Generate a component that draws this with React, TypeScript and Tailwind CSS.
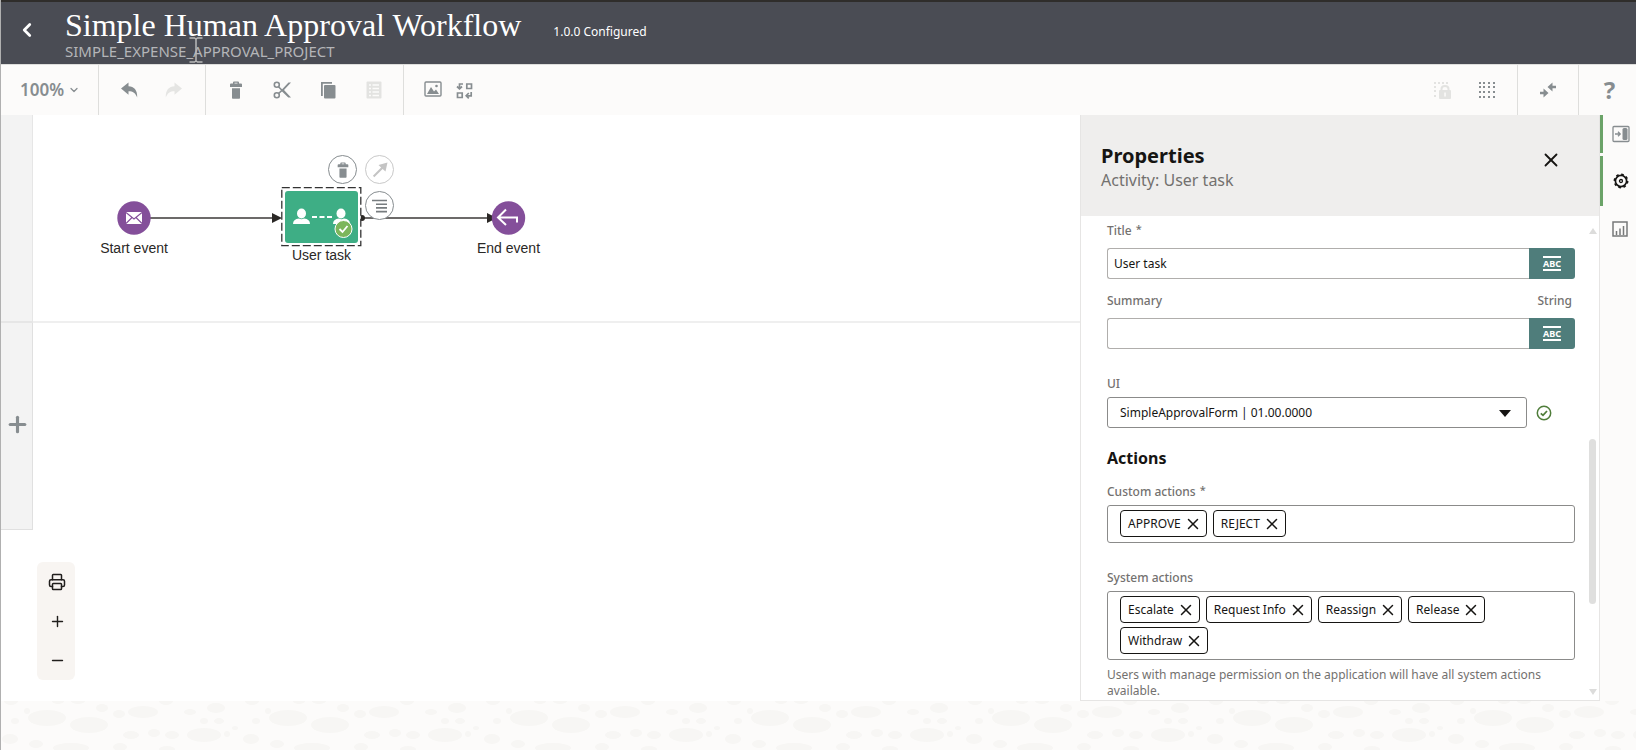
import { useState } from "react";
import type { ReactNode } from "react";
import { ChevronDown, ChevronLeft, Minus, Plus, Printer, X } from "lucide-react";

const BLOBS = [
  [10, 0, 7, 4], [57, 0, 6, 3], [77, 0, 7, 3], [101, 7, 6, 4], [165, 0, 7, 4],
  [46, 17, 19, 8], [88, 24, 19, 8], [142, 11, 15, 6], [118, 13, 6, 4], [26, 10, 3, 3],
  [14, 20, 4, 3], [9, 38, 8, 5], [35, 43, 7, 4], [70, 47, 18, 5], [119, 46, 7, 4],
  [130, 34, 8, 4], [153, 32, 6, 4], [171, 34, 7, 4], [189, 11, 6, 3], [215, 7, 9, 5],
  [203, 20, 4, 3], [218, 20, 5, 3], [234, 27, 3, 2], [226, 33, 3, 3], [203, 34, 17, 7],
  [166, 48, 8, 3],
];

function IconButton({ label, className = "", children }: { label: string; className?: string; children: ReactNode }) {
  return (
    <button aria-label={label} className={`flex size-6 shrink-0 items-center justify-center ${className}`}>
      {children}
    </button>
  );
}

function TrashIcon({ size }: { size: number }) {
  return (
    <svg width={size} height={size} viewBox="0 0 18 18" fill="currentColor">
      <path d="M6 2.500V1.500Q6 .5 7 .5h4q1 0 1 1v1h2q1 0 1 1V6H3V3.500q0-1 1-1zm1.500 0h3V1.800h-3zM5 7.200h8V17q0 .8-.8.8H5.800Q5 17.800 5 17z" />
    </svg>
  );
}

function Header() {
  return (
    <header className="relative flex h-16 shrink-0 items-start border-t-2 border-[#2f2d2b] bg-[#4a4c54] text-white">
      <button aria-label="Back" className="mt-4 ml-[14px] flex size-6 items-center justify-center">
        <ChevronLeft size={22} strokeWidth={3} />
      </button>
      <div className="mt-[7px] ml-[26px]">
        <h1 className="font-['Georgia','Liberation_Serif',serif] text-[32px] leading-[32px]">
          Simple Human Approval Workflow
        </h1>
        <p className="text-[15px] leading-[21px] text-[#b4b5b8]">SIMPLE_EXPENSE_APPROVAL_PROJECT</p>
      </div>
      <span className="mt-[20px] ml-[32px] text-[12px] leading-[20px]">1.0.0 Configured</span>
      <svg className="absolute top-[35px] left-[188px]" width="14" height="26" viewBox="0 0 14 26" fill="none" stroke="#b9b9b9" strokeWidth="1.500">
        <path d="M.5 1h5l1.500 1 1.500-1h5M7 2v22M.5 25h5L7 24l1.500 1h5" />
      </svg>
    </header>
  );
}

function Toolbar() {
  return (
    <div className="flex h-[51px] shrink-0 border-t border-[#dededc] bg-[#fcfbfa] text-[#878d90]">
      <button className="flex w-[98px] items-center gap-1 border-r border-[#dededc] pl-[19px] text-[17px] font-semibold">
        100%
        <ChevronDown size={12} strokeWidth={2.500} />
      </button>
      <div className="flex w-[107px] items-center gap-5 border-r border-[#dededc] pl-[18px]">
        <IconButton label="Undo">
          <svg width="17" height="16" viewBox="0 0 17 16" fill="currentColor">
            <path d="M0 6.500 7.500.5v3.800C13 4.500 16.500 8 16.200 15.500 14.500 11 12 9.200 7.500 9.200v3.500z" />
          </svg>
        </IconButton>
        <IconButton label="Redo" className="text-[#e5e5e3]">
          <svg width="17" height="16" viewBox="0 0 17 16" fill="currentColor">
            <path d="M17 6.500 9.500.5v3.800C4 4.500.5 8 .8 15.500 2.500 11 5 9.200 9.500 9.200v3.500z" />
          </svg>
        </IconButton>
      </div>
      <div className="flex w-[198px] items-center gap-[22px] border-r border-[#dededc] pl-[18px]">
        <IconButton label="Delete"><TrashIcon size={18} /></IconButton>
        <IconButton label="Cut">
          <svg width="18" height="18" viewBox="0 0 18 18" fill="none" stroke="currentColor" strokeWidth="1.600">
            <circle cx="3.800" cy="3.700" r="2.500" />
            <circle cx="3.800" cy="14.300" r="2.500" />
            <path d="m5.500 5.700 3.500 3.600M5.500 12.500 9 9.300" />
            <path d="m8 9.500 7.500-8H18l-7 7.500 7 7.500h-2.700z" fill="currentColor" stroke="none" />
          </svg>
        </IconButton>
        <IconButton label="Copy">
          <svg width="16" height="18" viewBox="0 0 16 18" fill="currentColor">
            <path d="M1 1h11v1.800H2.800V15H1z" />
            <rect x="4" y="4" width="11.500" height="13.500" rx="1" />
          </svg>
        </IconButton>
        <IconButton label="Paste" className="text-[#e3e3e1]">
          <svg width="16" height="18" viewBox="0 0 16 18">
            <rect x=".5" y=".5" width="15" height="17" rx="1" fill="currentColor" />
            <path d="M3 4h2M6.500 4H13M3 7.500h2M6.500 7.500H13M3 11h2M6.500 11H13M3 14.500h2M6.500 14.500H13" stroke="#fcfbfa" strokeWidth="1.500" />
          </svg>
        </IconButton>
      </div>
      <div className="flex flex-1 items-center gap-[7px] pl-[17px]">
        <IconButton label="Export image">
          <svg width="18" height="18" viewBox="0 0 18 18" fill="none" stroke="currentColor" strokeWidth="1.400">
            <rect x="1" y="1" width="16" height="14" rx="1" />
            <path d="m3 13 4-7 3 4.500 2-2L15 13z" fill="currentColor" stroke="none" />
            <circle cx="12.500" cy="5" r="1.300" fill="currentColor" stroke="none" />
          </svg>
        </IconButton>
        <IconButton label="Rearrange">
          <svg width="17" height="17" viewBox="0 0 17 17" fill="none" stroke="currentColor" strokeWidth="1.700">
            <path d="M10.800 2H15.500v4.500h-4.700zM1.500 11H6.200v4.500H1.500zM7 2H3.500v4M1 4.500l2.500 2.300L6 4.500M15.200 10v3.800h-4M12.800 11l-2.600 2.700 2.600 2.600" />
          </svg>
        </IconButton>
      </div>
      <div className="flex items-center gap-[21px] pr-[18px]">
        <IconButton label="Lock grid" className="text-[#e3e3e1]">
          <svg width="18" height="18" viewBox="0 0 18 18" fill="currentColor">
            <path d="M1 1h2v2H1zM5 1h2v2H5zM9 1h2v2H9zM13 1h2v2h-2zM1 5h2v2H1zM1 9h2v2H1zM1 14h2v2H1z" />
            <rect x="6" y="9" width="12" height="9" rx="1" />
            <path d="M8.500 9.500V8q0-3 3.500-3t3.500 3v1.500" fill="none" stroke="currentColor" strokeWidth="2" />
            <path d="M11.300 11.500h1.500v4h-1.500z" fill="#fcfbfa" />
          </svg>
        </IconButton>
        <IconButton label="Show grid">
          <svg width="18" height="18" viewBox="0 0 18 18" fill="currentColor">
            {[1, 5, 10, 15].map((y) => [1, 5, 10, 15].map((x) => <rect key={`${x}-${y}`} x={x} y={y} width="2" height="2" />))}
          </svg>
        </IconButton>
      </div>
      <div className="flex w-[61px] items-center justify-center border-l border-[#dededc]">
        <IconButton label="Collapse">
          <svg width="18" height="18" viewBox="0 0 18 18" fill="currentColor">
            <path d="M17 4.700h-3.500V1.500L8.500 6l5 4.500V7.200H17zM1 10.700h3.500V7.500l5 4.500-5 4.500v-3.300H1z" />
          </svg>
        </IconButton>
      </div>
      <div className="flex w-[58px] items-center justify-center border-l border-[#dededc] pl-1">
        <button aria-label="Help" className="text-[24px] leading-6 font-bold">?</button>
      </div>
    </div>
  );
}

function Diagram() {
  return (
    <svg className="absolute top-0 left-0" width="600" height="160" viewBox="33 115 600 160">
      <g stroke="#3c3a38" strokeWidth="1.600">
        <path d="M150 218h124M362 218h126" />
      </g>
      <path d="m272 213 10 5-10 5zM487 213l10 5-10 5z" fill="#2b2826" />
      <circle cx="362" cy="218" r="3" fill="#2b2826" />
      <circle cx="134" cy="218" r="16.700" fill="#844f9a" />
      <rect x="126" y="212" width="16" height="12" fill="#fff" />
      <path d="m126 212.500 8 6.500 8-6.500M126 223.500l6-6M142 223.500l-6-6" fill="none" stroke="#844f9a" strokeWidth="1.100" />
      <rect x="281.800" y="187.700" width="79" height="58" fill="#fff" stroke="#333" strokeWidth="1.300" strokeDasharray="8 3" />
      <rect x="285" y="191" width="73" height="52" rx="3" fill="#3eae85" />
      <g fill="#fff">
        <ellipse cx="301.500" cy="213.500" rx="4.500" ry="5" />
        <path d="M293 224q0-5 6-5.500 2.500 1.300 5 0 6 .5 6 5.500z" />
        <ellipse cx="341" cy="213.500" rx="4.500" ry="5" />
        <path d="M333 224q0-5 6-5.500 2.500 1.300 5 0 6 .5 6 5.500z" />
      </g>
      <path d="M312 217h20" stroke="#fff" strokeWidth="2" strokeDasharray="5 2.500" />
      <circle cx="343.500" cy="229" r="8.500" fill="#7cb65b" stroke="#fff" />
      <path d="m339.500 229 3 3 5-6" fill="none" stroke="#fff" strokeWidth="1.800" />
      <circle cx="508.500" cy="218" r="16.700" fill="#844f9a" />
      <path d="M506 209.500 498 217.500l8 7.500M498 217.500h19v5" fill="none" stroke="#fff" strokeWidth="2" />
      <g className="font-['Liberation_Sans',Arial,sans-serif] text-[14px]" fill="#2a2826" textAnchor="middle">
        <text x="134" y="253">Start event</text>
        <text x="321.500" y="260">User task</text>
        <text x="508.500" y="253">End event</text>
      </g>
    </svg>
  );
}

function Canvas() {
  return (
    <main className="flex min-w-0 flex-1">
      <div className="flex w-8 shrink-0 flex-col">
        <div className="h-[208px] shrink-0 border-r border-b-2 border-[#e6e6e6] bg-[#f3f3f3]" />
        <button aria-label="Add swimlane" className="flex h-[207px] shrink-0 items-center justify-center border-r border-b border-[#e0e0e0] bg-[#f3f3f3] pb-1 pl-[2px] text-[#878d90]">
          <Plus size={25} strokeWidth={3} />
        </button>
      </div>
      <div className="relative min-w-0 flex-1">
        <div className="h-[208px] border-b-2 border-[#efefef]" />
        <Diagram />
        <button aria-label="Delete node" className="absolute top-10 left-[295px] flex size-[29px] items-center justify-center rounded-full border border-[#878d90] bg-white text-[#878d90]">
          <TrashIcon size={16} />
        </button>
        <button aria-label="Connect" className="absolute top-10 left-[332px] flex size-[29px] items-center justify-center rounded-full border border-[#c9c9c9] bg-white text-[#c4c4c4]">
          <svg width="16" height="16" viewBox="0 0 16 16" fill="currentColor">
            <path d="M15.500.5 13.500 9.500 10.600 7 2.300 15.200.9 13.800 9.100 5.500 6.500 3z" />
          </svg>
        </button>
        <button aria-label="Node menu" className="absolute top-[76px] left-[332px] flex size-[29px] items-center justify-center rounded-full border border-[#878d90] bg-white text-[#777c7f]">
          <svg width="16" height="14" viewBox="0 0 16 14" stroke="currentColor" strokeWidth="1.600">
            <path d="M0 1.500h15M4 5.200h11M4 8.900h11M4 12.600h11" />
          </svg>
        </button>
        <div className="absolute bottom-[21px] left-1 flex h-[118px] w-[38px] flex-col items-center justify-between rounded-md bg-[#f8f5f2] py-2 pl-[2px] text-[#201e1c]">
          <IconButton label="Print"><Printer size={18} strokeWidth={2} /></IconButton>
          <IconButton label="Zoom in"><Plus size={17} strokeWidth={2} /></IconButton>
          <IconButton label="Zoom out"><Minus size={17} strokeWidth={2} /></IconButton>
        </div>
      </div>
    </main>
  );
}

function Required() {
  return <span className="ml-1 align-[2px] text-[11px] leading-none">*</span>;
}

function ExpressionField({ id, label, type, required, defaultValue }: { id: string; label: string; type?: string; required?: boolean; defaultValue?: string }) {
  return (
    <div>
      <div className="flex h-4 justify-between pr-[3px] font-medium">
        <label htmlFor={id}>
          {label}
          {required && <Required />}
        </label>
        {type && <span>{type}</span>}
      </div>
      <div className="mt-[9px] flex h-[31px]">
        <input id={id} defaultValue={defaultValue} className="min-w-0 flex-1 rounded-l-[3px] border border-r-0 border-[#b0aeac] bg-white px-[6px] text-[12px] text-[#161513]" />
        <button className="flex w-[46px] items-center justify-center rounded-r-[3px] bg-[#4f7d7b] text-white">
          <span className="border-y-2 border-white text-[9px] leading-[11px] font-bold">ABC</span>
        </button>
      </div>
    </div>
  );
}

function ChipBox({ label, required, items }: { label: string; required?: boolean; items: string[] }) {
  const [chips, setChips] = useState(items);

  return (
    <div role="group" aria-label={label}>
      <div className="h-4 font-medium">
        {label}
        {required && <Required />}
      </div>
      <div className="mt-[5px] flex flex-wrap gap-x-[6px] gap-y-1 rounded-[3px] border border-[#8b8b8a] pt-1 pr-16 pb-[5px] pl-3">
        {chips.map((c) => (
          <span key={c} className="flex h-[27px] items-center gap-[3px] rounded-[4px] border border-[#161513] pr-1 pl-[7px] text-[12px] leading-4 text-[#161513]">
            {c}
            <button aria-label={`Remove ${c}`} onClick={() => setChips(chips.filter((x) => x !== c))}>
              <X size={18} strokeWidth={2} />
            </button>
          </span>
        ))}
      </div>
    </div>
  );
}

function Properties() {
  return (
    <aside className="flex w-[520px] shrink-0 flex-col border-x border-b border-[#e6e5e4] bg-white text-[#73716f]">
      <div className="flex h-[101px] shrink-0 items-start justify-between bg-[#efeeed] pt-7 pr-[37px] pl-5">
        <div>
          <h2 className="text-[20px] leading-[26px] font-bold text-[#161513]">Properties</h2>
          <p className="text-[16px] leading-[22px]">Activity: User task</p>
        </div>
        <button aria-label="Close" className="mt-[6px] text-[#161513]">
          <X size={22} strokeWidth={2} />
        </button>
      </div>
      <div className="flex min-h-0 flex-1">
        <form className="min-w-0 flex-1 overflow-hidden pt-[7px] pr-[14px] pl-[26px] text-[12px] leading-4">
          <ExpressionField id="title" label="Title" required defaultValue="User task" />
          <div className="mt-[14px]">
            <ExpressionField id="summary" label="Summary" type="String" />
          </div>
          <div className="mt-[27px]">
            <label htmlFor="ui" className="block font-medium">UI</label>
            <div className="mt-[5px] flex items-center gap-[9px]">
              <div className="relative flex-1">
                <select id="ui" className="block h-[31px] w-full appearance-none rounded-[3px] border border-[#8b8b8a] bg-white px-3 text-[12px] text-[#161513]">
                  <option>SimpleApprovalForm | 01.00.0000</option>
                </select>
                <svg className="pointer-events-none absolute top-[13px] right-4" width="12" height="7" viewBox="0 0 12 7">
                  <path d="M0 0h12L6 7z" fill="#161513" />
                </svg>
              </div>
              <svg className="mr-[23px]" width="16" height="16" viewBox="0 0 16 16" fill="none" stroke="#4f7d3a" strokeWidth="1.500">
                <circle cx="8" cy="8" r="6.700" />
                <path d="m4.800 8.300 2.200 2 4-4.300" strokeWidth="1.800" />
              </svg>
            </div>
          </div>
          <h3 className="mt-[18px] text-[16px] leading-6 font-bold text-[#161513]">Actions</h3>
          <div className="mt-[14px]">
            <ChipBox label="Custom actions" required items={["APPROVE", "REJECT"]} />
          </div>
          <div className="mt-[27px]">
            <ChipBox label="System actions" items={["Escalate", "Request Info", "Reassign", "Release", "Withdraw"]} />
          </div>
          <p className="mt-[7px] pr-6">
            Users with manage permission on the application will have all system actions available.
          </p>
        </form>
        <div className="flex w-[10px] shrink-0 flex-col items-start py-3">
          <svg width="8" height="6" viewBox="0 0 8 6"><path d="M0 6h8L4 0z" fill="#dcdcdb" /></svg>
          <div className="mt-[205px] h-[165px] w-[7px] rounded-full bg-[#dfdfde]" />
          <svg className="mt-auto -mb-[7px]" width="8" height="6" viewBox="0 0 8 6"><path d="M0 0h8L4 6z" fill="#dcdcdb" /></svg>
        </div>
      </div>
    </aside>
  );
}

function Rail() {
  return (
    <nav className="flex w-9 shrink-0 flex-col bg-[#fcfbfa] text-[#878d90]">
      <button aria-label="Toggle panel" className="flex h-[38px] items-center justify-center border-l-3 border-[#6ba368] pl-[3px]">
        <svg width="18" height="18" viewBox="0 0 18 18" fill="none" stroke="currentColor">
          <rect x="1" y="1.500" width="16" height="15" rx="1" strokeWidth="1.300" />
          <rect x="10.500" y="3" width="5" height="12" rx="1.500" fill="currentColor" stroke="none" />
          <path d="M3 9h4.500M6 6.800 8.200 9 6 11.200" strokeWidth="1.300" />
        </svg>
      </button>
      <button aria-label="Properties" className="mt-[3px] flex h-[50px] items-center justify-center border-l-3 border-[#6ba368] pl-[2px] text-[#161513]">
        <svg width="16" height="16" viewBox="0 0 16 16" fill="none" stroke="currentColor">
          <circle cx="8" cy="8" r="5.600" strokeWidth="1.700" />
          <circle cx="8" cy="8" r="6.700" strokeWidth="1.500" strokeDasharray="2.600 2.660" />
          <circle cx="8" cy="8" r="1.500" strokeWidth="1.300" />
        </svg>
      </button>
      <button aria-label="Analytics" className="flex h-[46px] items-center justify-center pl-[3px] text-[#77797a]">
        <svg width="16" height="16" viewBox="0 0 16 16" fill="none" stroke="currentColor" strokeWidth="1.500">
          <path d="M1 1h14v14H1z" />
          <path d="M4.500 14v-4M8 14V7.500M11.500 14V5" />
        </svg>
      </button>
    </nav>
  );
}

export default function App() {
  return (
    <div className="flex h-screen min-h-[750px] flex-col border-l border-[#b0b0b0] bg-white font-['Noto_Sans',sans-serif]">
      <Header />
      <Toolbar />
      <div className="flex min-h-0 flex-1">
        <Canvas />
        <Properties />
        <Rail />
      </div>
      <footer className="h-[49px] shrink-0 bg-[#fcfbfa]">
        <svg width="100%" height="49">
          <defs>
            <pattern id="pebbles" width="241" height="49" patternUnits="userSpaceOnUse">
              {BLOBS.map(([cx, cy, rx, ry], i) => (
                <ellipse key={i} cx={cx} cy={cy} rx={rx} ry={ry} fill="#f7f6f4" />
              ))}
            </pattern>
          </defs>
          <rect width="100%" height="49" fill="url(#pebbles)" />
        </svg>
      </footer>
    </div>
  );
}
